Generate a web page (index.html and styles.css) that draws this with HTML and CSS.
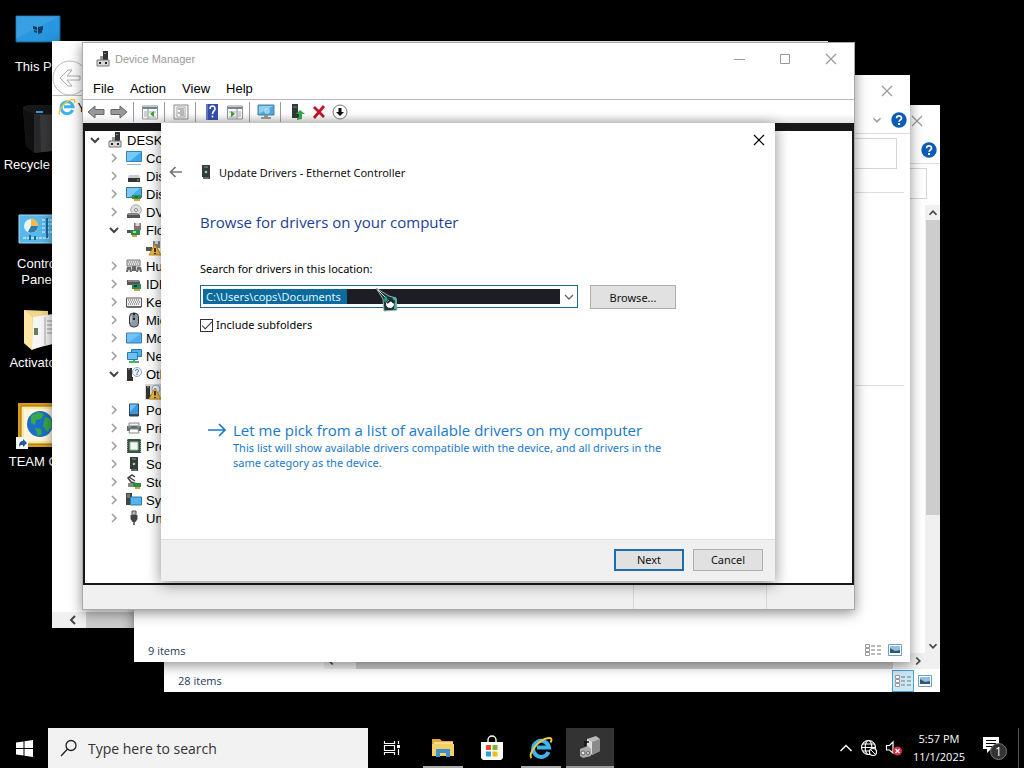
FILE: index.html
```html
<!DOCTYPE html>
<html lang="en">
<head>
<meta charset="UTF-8" />
<title>Desktop</title>
<link rel="stylesheet" href="styles.css">
</head>
<body>

<svg class="defs" aria-hidden="true">
  <symbol id="i-right" viewBox="0 0 16 16"><path d="M6 4l4 4-4 4" fill="none" stroke="#a0a0a0" stroke-width="1.6"/></symbol>
  <symbol id="i-down" viewBox="0 0 16 16"><path d="M4 6l4 4 4-4" fill="none" stroke="#444" stroke-width="2"/></symbol>
  <symbol id="i-up" viewBox="0 0 16 16"><path d="M4 10l4-4 4 4" fill="none" stroke="#444" stroke-width="2"/></symbol>
  <symbol id="i-close" viewBox="0 0 16 16"><path d="M3 3l10 10M13 3L3 13" fill="none" stroke="currentColor" stroke-width="1.2"/></symbol>
  <symbol id="i-help" viewBox="0 0 16 16"><circle cx="8" cy="8" r="7.7" fill="#0b5cb4"/><path d="M5.6 6.2c0-3 4.9-3 4.9 0 0 1.6-2.4 1.8-2.4 3.6" fill="none" stroke="#fff" stroke-width="1.7"/><rect x="7.1" y="11" width="2" height="2" fill="#fff"/></symbol>
  <symbol id="i-pc" viewBox="0 0 16 16"><path d="M8 0h5v9H8z" fill="#333"/><path d="M9 2.5h2" stroke="#888"/><path d="M5 5h3v4H5z" fill="#999"/><path d="M2 9h12v6H2z" fill="#d8d8d8" stroke="#777"/><path d="M4 11h2v2H4zM10 11h2v2h-2z" fill="#222"/></symbol>
  <symbol id="i-screen" viewBox="0 0 16 16"><path d="M.5 1.500h15v10H.5z" fill="#3aa9ea" stroke="#3a82b5"/><path d="M1 2h14L4 11H1z" fill="#74cbfa"/><path d="M1 14.500h14" stroke="#8fb6d0"/></symbol>
  <symbol id="i-monitor" viewBox="0 0 16 16"><path d="M.5 3h15v10H.5z" fill="#52aeea" stroke="#377bb0"/><path d="M1 3.500h14L3 12H1z" fill="#72c3f5"/></symbol>
  <symbol id="i-disk" viewBox="0 0 16 16"><path d="M3 7h10l1 3H2z" fill="#ccc"/><path d="M2 10h12v4H2z" fill="#333"/><path d="M11 12h2" stroke="#6d6"/></symbol>
  <symbol id="i-display" viewBox="0 0 16 16"><path d="M.5 1.500h15v10H.5z" fill="#49aee6" stroke="#3a6f95"/><path d="M1 2h13L4 11H1z" fill="#7acaf5"/><path d="M6 9h9v4H6z" fill="#2e9350"/><path d="M8 13h6v2H8z" fill="#d7a934"/><path d="M9 10h3v2H9z" fill="#174"/></symbol>
  <symbol id="i-dvd" viewBox="0 0 16 16"><circle cx="10" cy="6" r="5.300" fill="#ddd" stroke="#aaa"/><circle cx="10" cy="6" r="1.500" fill="#fff" stroke="#888"/><path d="M2 9h9l3 2v3H1v-3z" fill="#555"/><path d="M2 10h10" stroke="#bbb"/></symbol>
  <symbol id="i-floppy" viewBox="0 0 16 16"><path d="M8 1h7v7H8z" fill="#777"/><path d="M9.500 1h4v3h-4z" fill="#fcc"/><path d="M1 8h9v3H1z" fill="#555"/><path d="M5 8h9v5H5z" fill="#2e8b44"/><path d="M7 9h3v2H7z" fill="#9d9"/><path d="M6 13h5v2H6z" fill="#c9a63c"/></symbol>
  <symbol id="i-warn" viewBox="0 0 16 16"><path d="M8 1h7v7H8z" fill="#888"/><path d="M10 1h3v3h-3z" fill="#cde"/><path d="M1 7h6v4H1z" fill="#555"/><path d="M10 4l6 11H4z" fill="#f6b93b" stroke="#b57d15" stroke-width=".8"/><path d="M10 8v4M10 13v1.300" stroke="#111" stroke-width="1.500"/></symbol>
  <symbol id="i-unknown" viewBox="0 0 16 16"><path d="M1 2h5v9h1v4H1z" fill="#333"/><path d="M2 3h2" stroke="#aaa"/><circle cx="11" cy="6" r="4.500" fill="#eef5fc" stroke="#8fa9c4"/><path d="M9.500 5c0-2 3-2 3 0 0 1-1.500 1-1.500 2.500M11 8v1" fill="none" stroke="#2b5c9e"/></symbol>
  <symbol id="i-unknown-warn" viewBox="0 0 16 16"><path d="M1 2h4v9h1v4H1z" fill="#333"/><path d="M2 3h2" stroke="#aaa"/><circle cx="11" cy="5" r="4" fill="#eef5fc" stroke="#8fa9c4"/><path d="M10 4l6 11H4z" fill="#f6b93b" stroke="#b57d15" stroke-width=".8"/><path d="M10 7v4.500M10 13v1.300" stroke="#111" stroke-width="1.500"/></symbol>
  <symbol id="i-hid" viewBox="0 0 16 16"><path d="M1 2h13v6H1z" fill="#ddd" stroke="#777"/><path d="M2 4h11M3 6h10" stroke="#777" stroke-dasharray="1 1"/><path d="M1 9h4l1 5H4L3 11l-1 3H0zM6 8h4v5H6zM11 9h4l1 5h-2l-1-3-1 3h-2z" fill="#666"/></symbol>
  <symbol id="i-ide" viewBox="0 0 16 16"><path d="M1 4h12l1 2v3H1z" fill="#555"/><path d="M2 5h11" stroke="#bbb"/><path d="M6 8h9v5H6z" fill="#2e8b57"/><path d="M8 9h3v2H8z" fill="#134"/><path d="M8 13h6v2H8z" fill="#c9a63c"/></symbol>
  <symbol id="i-keyboard" viewBox="0 0 16 16"><path d="M.5 4h15v9H.5z" fill="#eee" stroke="#555"/><path d="M2 6h12M3 8h11M2 10h12" stroke="#555" stroke-dasharray="1 1"/><path d="M1 13h14" stroke="#333"/></symbol>
  <symbol id="i-mouse" viewBox="0 0 16 16"><rect x="3.500" y="1" width="9" height="14" rx="4" fill="#8f9aa5" stroke="#333"/><path d="M8 1v7" stroke="#222" stroke-width="2"/><path d="M8 3v3" stroke="#8fd6ff"/><path d="M5 4v6" stroke="#dde"/></symbol>
  <symbol id="i-network" viewBox="0 0 16 16"><path d="M5.500 1.500h10v7h-10z" fill="#4fb0ea" stroke="#2a77ac"/><path d="M1.500 4.500h10v7h-10z" fill="#6cc3f3" stroke="#2a77ac"/><path d="M3 14h10M8 12v2" stroke="#4caf6a" stroke-width="2"/></symbol>
  <symbol id="i-portable" viewBox="0 0 16 16"><path d="M3.500 2h9v12h-9z" fill="#3b98e0" stroke="#345"/><path d="M4 2.500h7L4 10z" fill="#6fbdf5"/><path d="M4 13h8" stroke="#333" stroke-width="1.500"/></symbol>
  <symbol id="i-printer" viewBox="0 0 16 16"><path d="M3 3h10v3H3z" fill="#eee" stroke="#888"/><path d="M1 6h14v5H1z" fill="#666"/><path d="M4 9h8l1 4H3z" fill="#fff" stroke="#888"/><path d="M2 7h3M11 7h3" stroke="#5cb"/></symbol>
  <symbol id="i-cpu" viewBox="0 0 16 16"><path d="M1 1h14v14H1z" fill="#36543f"/><path d="M4 4h8v8H4z" fill="#f4f6f4" stroke="#9b9"/><path d="M1.500 1v14M14.500 1v14" stroke="#8a9" stroke-dasharray="1 1"/></symbol>
  <symbol id="i-tower" viewBox="0 0 16 16"><path d="M4 1h8v12H4zM5 13h7v2H5z" fill="#333c38"/><path d="M6 3h4M5 14h6" stroke="#899"/><circle cx="8" cy="8" r="1.300" fill="#9cb"/></symbol>
  <symbol id="i-storage" viewBox="0 0 16 16"><path d="M9 3L6 1 2 4l3 4 6 2M3 3l6 4" fill="none" stroke="#444" stroke-width="1.500"/><path d="M2 9h7v4H2z" fill="#888"/><path d="M7 9h8v4H7z" fill="#2e8b44"/><path d="M9 13h5v2H9z" fill="#c9a63c"/></symbol>
  <symbol id="i-system" viewBox="0 0 16 16"><path d="M0 1h6v12H0z" fill="#444"/><path d="M1 3h3M1 5h3" stroke="#6c8"/><path d="M4.500 5h11v8h-11z" fill="#55b4ec" stroke="#2a77ac"/></symbol>
  <symbol id="i-usb" viewBox="0 0 16 16"><path d="M6 1h4v4H6z" fill="#bbb" stroke="#555"/><path d="M4.500 5h7v4l-2 3h-3l-2-3z" fill="#444"/><path d="M8 11v4" stroke="#444" stroke-width="1.500"/></symbol>
  <symbol id="i-ie" viewBox="0 0 24 24"><path d="M19.500 16A8 8 0 1 1 20 11.500H8" fill="none" stroke="#3cb4ee" stroke-width="4"/><path d="M2.500 22C-1 18 9 3 20 2c3-.300 3 2 1.500 4.500" fill="none" stroke="#f2c834" stroke-width="1.900"/></symbol>
  <symbol id="i-details" viewBox="0 0 18 14"><path d="M1.500 1.500h4v3h-4zM1.500 5.500h4v3h-4zM1.500 9.500h4v3h-4z" fill="#fff" stroke="#999"/><path d="M7 3h10M7 7h10M7 11h10" stroke="#777" stroke-dasharray="4 2"/></symbol>
  <symbol id="i-thumbs" viewBox="0 0 14 12"><path d="M.5.500h13v11H.5z" fill="#fff" stroke="#6e9cc2"/><path d="M2 2h10v4L2 9z" fill="#8fc0e6"/><path d="M2 4l5 3 5-1v3H2z" fill="#33566b"/></symbol>
</svg>

<main class="desktop">
  <ul class="shortcuts">
    <li>
      <svg width="46" height="28" viewBox="0 0 46 28"><path d="M1 1h44v26H1z" fill="#2797df" stroke="#17608f"/><path d="M1 1h44L1 24z" fill="#48aae8" opacity=".5"/><path d="M18 11l4 1v3l-4-1zM23 12l5-1v4l-5 1zM19 15l3 1v2l-3-1zM23 16l4-1v3l-4 1z" fill="#123c62"/></svg>
      <span>This PC</span>
    </li>
    <li>
      <svg width="30" height="48" viewBox="0 0 30 48"><path d="M0 2l6-2h24v46l-18 2-9-7z" fill="#29292b"/><path d="M0 2l11 7h19V0H6z" fill="#161719"/><path d="M11 9v38l-8-6L0 3z" fill="#101113"/><path d="M17 10h13v36l-12 1z" fill="#39393b"/><path d="M13 7h7" stroke="#2c9ae4" stroke-width="2"/></svg>
      <span>Recycle Bin</span>
    </li>
    <li>
      <svg width="40" height="30" viewBox="0 0 40 30"><path d="M1 1h38v28H1z" fill="#58b8eb" stroke="#a4dbf6"/><circle cx="13" cy="12" r="7" fill="#e6f3fa"/><path d="M13 12V4a8 8 0 0 1 7 8z" fill="#f4b947"/><path d="M13 12h7a7 7 0 0 1-10 6z" fill="#3578ad"/><path d="M24 6h10M24 10h12M24 14h8M24 18h12M5 24h26" stroke="#fff" stroke-dasharray="3 1"/><path d="M12 21v5M17 22v4M29 4v20" stroke="#176aa0" stroke-width="2"/></svg>
      <span>Control<br>Panel</span>
    </li>
    <li>
      <svg width="30" height="42" viewBox="0 0 30 42"><path d="M1 1l24 1v33L9 41l-8-7z" fill="#f3d689"/><path d="M10 8l20-3v30l-21 5z" fill="#f7f7f7"/><path d="M22 8v28" stroke="#aaa"/><path d="M24 12h5M24 16h5M24 20h5M24 24h5" stroke="#999"/><path d="M11 19h4v7h-4z" fill="#6c7b5a"/><path d="M1 1l8 7v33l-8-7z" fill="#ffe6a4"/></svg>
      <span>Activators</span>
    </li>
    <li>
      <svg width="44" height="48" viewBox="0 0 44 48"><path d="M2 1h40v44H2z" fill="#d99d19"/><path d="M5 4h34v38H5z" fill="#fae7a0" stroke="#9c6c0c"/><path d="M8 7h28v32H8z" fill="#fff7d7"/><circle cx="24" cy="22" r="13" fill="#1c6fc9"/><path d="M15 14l7-4 6 2-3 5-5 1-1 5-4-2zM29 15l6 2 1 8-5 5-4-6zM19 26l6 1 1 5-4 2z" fill="#38a948"/><path d="M0 35h12v12H0z" fill="#f7f7f7"/><path d="M3 45c0-4 1-6 4-6v-2l4 4-4 4v-2c-2 0-3 0-4 2z" fill="#235898"/></svg>
      <span>TEAM OS</span>
    </li>
  </ul>

  <section class="window browser">
    <div class="nav"><svg width="36" height="36" viewBox="0 0 36 36"><circle cx="18" cy="18" r="17" fill="#fff" stroke="#bbb"/><path d="M28 16H15l5-6h-4l-8 8 8 8h4l-5-6h13z" fill="#fff" stroke="#aaa"/></svg></div>
    <div class="tab"><svg width="18" height="18"><use href="#i-ie"/></svg><span>Y</span></div>
    <div class="hscroll"><svg class="turn" width="16" height="16"><use href="#i-up"/></svg><div class="thumb"></div></div>
  </section>

  <section class="window explorer explorer-back">
    <header class="caption"><button class="plain" aria-label="Close"><svg width="16" height="16"><use href="#i-close"/></svg></button></header>
    <div class="ribbon"><svg width="16" height="16"><use href="#i-help"/></svg></div>
    <div class="address"><div class="box"></div></div>
    <div class="files">
      <div class="vscroll"><svg width="14" height="14"><use href="#i-up"/></svg><div class="thumb"></div><svg width="14" height="14"><use href="#i-down"/></svg></div>
    </div>
    <div class="hscroll"><svg class="turn" width="14" height="14"><use href="#i-up"/></svg><div class="thumb"></div><svg class="turn-right" width="14" height="14"><use href="#i-up"/></svg></div>
    <footer class="items"><span>28 items</span>
      <button class="view on" aria-label="Details"><svg width="18" height="14"><use href="#i-details"/></svg></button>
      <button class="view" aria-label="Thumbnails"><svg width="14" height="12"><use href="#i-thumbs"/></svg></button>
    </footer>
  </section>

  <section class="window explorer explorer-front">
    <header class="caption"><button class="plain" aria-label="Close"><svg width="16" height="16"><use href="#i-close"/></svg></button></header>
    <div class="ribbon"><svg class="faint" width="14" height="14"><use href="#i-down"/></svg><svg width="16" height="16"><use href="#i-help"/></svg></div>
    <div class="address"><div class="box"></div></div>
    <div class="rules"></div>
    <footer class="items"><span>9 items</span>
      <button class="view" aria-label="Details"><svg width="18" height="14"><use href="#i-details"/></svg></button>
      <button class="view" aria-label="Thumbnails"><svg width="14" height="12"><use href="#i-thumbs"/></svg></button>
    </footer>
  </section>

  <section class="window manager">
    <header class="title">
      <svg width="16" height="16"><use href="#i-pc"/></svg>
      <h1>Device Manager</h1>
      <button class="plain" aria-label="Minimize"><svg width="16" height="16" viewBox="0 0 16 16"><path d="M3 8.500h11" stroke="currentColor"/></svg></button>
      <button class="plain" aria-label="Maximize"><svg width="16" height="16" viewBox="0 0 16 16"><path d="M3.500 3.500h9v9h-9z" fill="none" stroke="currentColor"/></svg></button>
      <button class="plain" aria-label="Close"><svg width="16" height="16"><use href="#i-close"/></svg></button>
    </header>
    <nav class="menu">
      <a href="#">File</a>
      <a href="#">Action</a>
      <a href="#">View</a>
      <a href="#">Help</a>
    </nav>
    <div class="toolbar">
      <button class="plain" aria-label="Back"><svg width="18" height="16" viewBox="0 0 18 16"><path d="M1 8l7-6v3.500h9v5H8V14z" fill="#999" stroke="#666"/></svg></button>
      <button class="plain" aria-label="Forward"><svg width="18" height="16" viewBox="0 0 18 16"><path d="M17 8l-7-6v3.500H1v5h9V14z" fill="#999" stroke="#666"/></svg></button>
      <i class="bar"></i>
      <button class="plain" aria-label="Console tree"><svg width="18" height="16" viewBox="0 0 18 16"><path d="M1.500 2h15v13h-15z" fill="#f5f7f8" stroke="#8b959d"/><path d="M2 4h14" stroke="#738391" stroke-width="2"/><path d="M7 5v10" stroke="#888"/><path d="M3 8h3M3 10h3M3 12h3M8 8h7M8 13h7" stroke="#aaa"/><path d="M13 7v6l-4-3z" fill="#3b9c36"/></svg></button>
      <i class="bar"></i>
      <button class="plain" aria-label="Properties"><svg width="18" height="16" viewBox="0 0 18 16"><path d="M2 1h14v14H2z" fill="#f4f4f4" stroke="#888"/><path d="M5 3h8v10H5z" fill="#fff" stroke="#aaa"/><path d="M6 5h6M8 7h4M6 9h6M8 11h4" stroke="#777"/></svg></button>
      <i class="bar"></i>
      <button class="plain" aria-label="Help"><svg width="18" height="16" viewBox="0 0 18 16"><path d="M3 0h12v16H3z" fill="#334fae"/><path d="M4 0v16" stroke="#8fa4e6"/><path d="M7 5c0-4 5-4 5 0 0 2-2.500 2-2.500 5M9.500 11.500v2" fill="none" stroke="#fff" stroke-width="1.600"/></svg></button>
      <button class="plain" aria-label="Action pane"><svg width="18" height="16" viewBox="0 0 18 16"><path d="M1.500 2h15v13h-15z" fill="#f5f7f8" stroke="#8b959d"/><path d="M2 4h14" stroke="#738391" stroke-width="2"/><path d="M11 5v10" stroke="#888"/><path d="M12 8h3M12 10h3M12 12h3M3 8h7M3 13h7" stroke="#aaa"/><path d="M5 7v6l4-3z" fill="#3b9c36"/></svg></button>
      <i class="bar"></i>
      <button class="plain" aria-label="Scan"><svg width="18" height="16" viewBox="0 0 18 16"><path d="M1 1h16v10H1z" fill="#4da9dd" stroke="#4b829f"/><path d="M2 2h14L2 10z" fill="#90cfee"/><path d="M4 14h10M7 12h4" stroke="#999" stroke-width="2"/><circle cx="10" cy="7" r="3" fill="#b9e5f9" opacity=".7"/></svg></button>
      <i class="bar"></i>
      <button class="plain" aria-label="Update driver"><svg width="18" height="16" viewBox="0 0 18 16"><path d="M4 0h6v10h2v4H4z" fill="#303a34"/><path d="M5 3h4" stroke="#788"/><path d="M12 6l5 4h-3v5l-5 1v-2l2-1v-3H8z" fill="#36a94c"/></svg></button>
      <button class="plain" aria-label="Uninstall"><svg width="16" height="16" viewBox="0 0 16 16"><path d="M3 3l10 10M13 2L3 14" stroke="#c4152b" stroke-width="2.800"/></svg></button>
      <button class="plain" aria-label="Disable"><svg width="16" height="16" viewBox="0 0 16 16"><circle cx="8" cy="8" r="7" fill="#fff" stroke="#777"/><path d="M6.500 4h3v4H12l-4 4-4-4h2.500z" fill="#111"/></svg></button>
    </div>
    <div class="content">
      <ul class="tree">
        <li><svg><use href="#i-down"/></svg><svg><use href="#i-pc"/></svg>DESK</li>
        <li class="sub"><svg><use href="#i-right"/></svg><svg><use href="#i-screen"/></svg>Com</li>
        <li class="sub"><svg><use href="#i-right"/></svg><svg><use href="#i-disk"/></svg>Disk</li>
        <li class="sub"><svg><use href="#i-right"/></svg><svg><use href="#i-display"/></svg>Disp</li>
        <li class="sub"><svg><use href="#i-right"/></svg><svg><use href="#i-dvd"/></svg>DVD</li>
        <li class="sub"><svg><use href="#i-down"/></svg><svg><use href="#i-floppy"/></svg>Flop</li>
        <li class="leaf"><svg><use href="#i-warn"/></svg></li>
        <li class="sub"><svg><use href="#i-right"/></svg><svg><use href="#i-hid"/></svg>Hum</li>
        <li class="sub"><svg><use href="#i-right"/></svg><svg><use href="#i-ide"/></svg>IDE</li>
        <li class="sub"><svg><use href="#i-right"/></svg><svg><use href="#i-keyboard"/></svg>Key</li>
        <li class="sub"><svg><use href="#i-right"/></svg><svg><use href="#i-mouse"/></svg>Mice</li>
        <li class="sub"><svg><use href="#i-right"/></svg><svg><use href="#i-monitor"/></svg>Mon</li>
        <li class="sub"><svg><use href="#i-right"/></svg><svg><use href="#i-network"/></svg>Net</li>
        <li class="sub"><svg><use href="#i-down"/></svg><svg><use href="#i-unknown"/></svg>Oth</li>
        <li class="leaf selected"><svg><use href="#i-unknown-warn"/></svg></li>
        <li class="sub"><svg><use href="#i-right"/></svg><svg><use href="#i-portable"/></svg>Port</li>
        <li class="sub"><svg><use href="#i-right"/></svg><svg><use href="#i-printer"/></svg>Print</li>
        <li class="sub"><svg><use href="#i-right"/></svg><svg><use href="#i-cpu"/></svg>Proc</li>
        <li class="sub"><svg><use href="#i-right"/></svg><svg><use href="#i-tower"/></svg>Soft</li>
        <li class="sub"><svg><use href="#i-right"/></svg><svg><use href="#i-storage"/></svg>Stor</li>
        <li class="sub"><svg><use href="#i-right"/></svg><svg><use href="#i-system"/></svg>Syst</li>
        <li class="sub"><svg><use href="#i-right"/></svg><svg><use href="#i-usb"/></svg>Univ</li>
      </ul>
    </div>
    <footer class="status"><span></span><span></span><span></span></footer>
  </section>

  <form class="window dialog">
    <div class="dialog-top"><button type="button" class="plain" aria-label="Close"><svg width="16" height="16"><use href="#i-close"/></svg></button></div>
    <div class="dialog-title">
      <button type="button" class="plain" aria-label="Back"><svg width="14" height="14" viewBox="0 0 14 14"><path d="M13 7H2M6.500 2L1.500 7l5 5" fill="none" stroke="#777" stroke-width="1.700"/></svg></button>
      <svg width="16" height="16"><use href="#i-tower"/></svg>
      <span>Update Drivers - Ethernet Controller</span>
    </div>
    <div class="dialog-body">
      <h2>Browse for drivers on your computer</h2>
      <label for="location">Search for drivers in this location:</label>
      <div class="pick">
        <div class="combo">
          <input type="text" id="location" value="C:\Users\cops\Documents" />
          <button type="button" class="plain" aria-label="Show locations"><svg width="14" height="14" viewBox="0 0 14 14"><path d="M3 5l4 4 4-4" fill="none" stroke="#666" stroke-width="1.300"/></svg></button>
        </div>
        <button type="button" class="push browse">Browse...</button>
      </div>
      <label class="check"><input type="checkbox" checked />Include subfolders</label>
      <a class="command" href="#">
        <svg width="20" height="14" viewBox="0 0 20 14"><path d="M1 7h17M12 1l6 6-6 6" fill="none" stroke="#1979ca" stroke-width="1.700"/></svg>
        <strong>Let me pick from a list of available drivers on my computer</strong>
        <span>This list will show available drivers compatible with the device, and all drivers in the<br>same category as the device.</span>
      </a>
    </div>
    <footer class="dialog-buttons">
      <button type="submit" class="push main">Next</button>
      <button type="button" class="push">Cancel</button>
    </footer>
  </form>

  <svg class="pointer" width="24" height="26" viewBox="0 0 24 26"><path d="M1 1l13 8 7 2 1 12-13 1-1-12z" fill="#15383c" stroke="#9db3b3"/><path d="M3 3l8 8" stroke="#ddd"/><path d="M9 12l2-3 2 4-2 7z" fill="#20a38a"/><circle cx="15" cy="17" r="4.500" fill="#fff" stroke="#123"/><path d="M18 11l3 2-1 9" fill="none" stroke="#4bb6ae" stroke-width="2"/><path d="M12 16l4-3 3 3" fill="none" stroke="#222" stroke-width="2"/></svg>
</main>

<footer class="taskbar">
  <button class="start" aria-label="Start"><svg width="17" height="17" viewBox="0 0 17 17"><path d="M0 2.500L7.500 1.500V8H0zM8.500 1.300L17 0v8H8.500zM0 9h7.500v6.500L0 14.500zM8.500 9H17v8l-8.500-1.300z" fill="#fff"/></svg></button>
  <label class="search">
    <svg width="18" height="18" viewBox="0 0 18 18"><circle cx="11" cy="6.500" r="5" fill="none" stroke="#222" stroke-width="1.300"/><path d="M7.500 10L1 17" stroke="#222" stroke-width="1.300"/></svg>
    <input type="text" placeholder="Type here to search" aria-label="Type here to search" />
  </label>
  <button class="task view-tasks" aria-label="Task View"><svg width="18" height="16" viewBox="0 0 18 16"><path d="M1.500 1v2.500h10V1M1.500 5.500h10v5h-10zM1.500 15v-2.500h10V15M15.500 1v3M15.500 9v6" fill="none" stroke="#fff" stroke-width="1.200"/><path d="M14 5h3v3h-3z" fill="#fff"/></svg></button>
  <button class="task open" aria-label="File Explorer"><svg width="24" height="20" viewBox="0 0 24 20"><path d="M1 1h8l2 2h11v15H1z" fill="#e7a83b"/><path d="M3 4h19v4H3z" fill="#f9df91"/><path d="M1 6h22v12H1z" fill="#f8cf62"/><path d="M5 11h14v8h-4v-4H9v4H5z" fill="#3b92cf"/></svg></button>
  <button class="task" aria-label="Store"><svg width="24" height="26" viewBox="0 0 24 26"><path d="M8 8V5a4 4 0 0 1 8 0v3" fill="none" stroke="#fff" stroke-width="1.400"/><path d="M1 7h22v16l-2 2H3l-2-2z" fill="#fff"/><path d="M6 10h5v5H6z" fill="#e84b28"/><path d="M12.500 10h5v5h-5z" fill="#74b92f"/><path d="M6 16.500h5v5H6z" fill="#259fe0"/><path d="M12.500 16.500h5v5h-5z" fill="#f6b915"/></svg></button>
  <button class="task open" aria-label="Internet Explorer"><svg width="24" height="24"><use href="#i-ie"/></svg></button>
  <button class="task active" aria-label="Device Manager"><svg width="24" height="24" viewBox="0 0 24 24"><path d="M9 4l9-3 4 3v12l-8 4-5-3z" fill="#b9b9b9"/><path d="M14 7l8-3v12l-8 4z" fill="#8b8b8b"/><path d="M9 4l5 3v12l-5-3z" fill="#ddd"/><path d="M2 14l8-3 3 3v7l-8 2-3-2z" fill="#aaa"/><circle cx="5" cy="18" r="2" fill="#eee" stroke="#666"/><circle cx="10" cy="18" r="1.500" fill="#eee" stroke="#666"/><path d="M7 11V7h4" fill="none" stroke="#111" stroke-width="1.500"/></svg></button>
  <div class="tray">
    <svg width="14" height="14" viewBox="0 0 14 14"><path d="M1.500 10L7 4.500l5.500 5.500" fill="none" stroke="#fff" stroke-width="1.400"/></svg>
    <svg width="18" height="18" viewBox="0 0 18 18"><g fill="none" stroke="#fff" stroke-width="1.100"><circle cx="8.500" cy="8.500" r="7"/><ellipse cx="8.500" cy="8.500" rx="3.300" ry="7"/><path d="M1.500 8.500h14M2.500 5h12M2.500 12h12"/></g><circle cx="13" cy="13" r="3.500" fill="#000" stroke="#fff" stroke-width="1.200"/><path d="M11 11l4 4" stroke="#fff"/></svg>
    <svg width="18" height="16" viewBox="0 0 18 16"><path d="M1.500 5.500h3L8 2v11L4.500 10h-3z" fill="none" stroke="#fff" stroke-width="1.200"/><circle cx="12.500" cy="11" r="4.500" fill="#d52b3d"/><path d="M10.500 9l4 4M14.500 9l-4 4" stroke="#fff" stroke-width="1.300"/></svg>
    <time>5:57 PM<br>11/1/2025</time>
    <button class="notes" aria-label="Notifications"><svg width="26" height="26" viewBox="0 0 26 26"><path d="M1 2h16v12H9l-4 4v-4H1z" fill="#fff"/><path d="M4 5.500h10M4 8.500h10M4 11.500h7" stroke="#000"/><circle cx="16.500" cy="16.500" r="8" fill="#333" stroke="#777"/></svg><b>1</b></button>
  </div>
</footer>

</body>
</html>
```
FILE: styles.css
```css
* { box-sizing: border-box; }
body { margin: 0; height: 100vh; display: flex; flex-direction: column; background: #000; font-family: "Open Sans", sans-serif; font-size: 11px; overflow: hidden; }
ul { list-style: none; margin: 0; padding: 0; }
h1, h2 { margin: 0; font-weight: normal; }
button, input { font: inherit; color: inherit; margin: 0; }
svg { display: block; flex: none; }
a { color: inherit; text-decoration: none; }
.defs { position: absolute; width: 0; height: 0; }
.plain { border: 0; padding: 0; background: none; display: block; }

.desktop { flex: 1; position: relative; overflow: hidden; }
.window { position: absolute; display: flex; flex-direction: column; background: #fff; box-shadow: 0 3px 12px rgba(0,0,0,.45); }

/* desktop icons */
.shortcuts { width: 76px; padding-top: 14px; font-family: "Liberation Sans", sans-serif; font-size: 13px; line-height: 16px; color: #fff; text-align: center; }
.shortcuts li { height: 98px; display: flex; flex-direction: column; align-items: center; justify-content: flex-end; gap: 4px; white-space: nowrap; }
.shortcuts li:first-child { height: 61px; gap: 16px; }
.shortcuts li:nth-child(3) { height: 115px; gap: 12px; }
.shortcuts li:nth-child(4) { height: 83px; }
.shortcuts li:nth-child(5) { height: 99px; }

/* explorer windows */
.explorer-back { inset: 105px 84px 36px 164px; }
.explorer-front { inset: 75px 114px 66px 134px; }
.caption { height: 32px; display: flex; justify-content: flex-end; align-items: center; padding-right: 15px; color: #999; }
.ribbon { height: 27px; display: flex; justify-content: flex-end; align-items: center; gap: 7px; padding-right: 3px; border-bottom: 1px solid #ddd; }
.faint { opacity: .5; }
.address { height: 41px; padding: 4px 13px 6px 400px; }
.address .box { height: 31px; border: 1px solid #d5d5d5; }
.files { flex: 1; display: flex; justify-content: flex-end; }
.vscroll { width: 15px; background: #f0f0f0; display: flex; flex-direction: column; align-items: center; padding-top: 1px; }
.vscroll .thumb { width: 14px; flex: 0 0 66%; margin-bottom: auto; background: #cdcdcd; }
.hscroll { height: 16px; display: flex; align-items: center; background: #f0f0f0; }
.hscroll .thumb { flex: 1; height: 100%; background: #cdcdcd; }
.explorer-back .hscroll { margin-left: 160px; padding-right: 15px; gap: 18px; }
.turn { transform: rotate(-90deg); }
.turn-right { transform: rotate(90deg); }
.items { height: 23px; display: flex; align-items: center; padding: 0 4px 0 14px; color: #1e395b; }
.explorer-front .items { padding-bottom: 1px; }
.items span { margin-right: auto; }
.view { width: 22px; height: 22px; border: 1px solid transparent; padding: 0; background: none; display: grid; place-items: center; }
.view.on { background: #cce8f7; border-color: #4ba3cc; }
.rules { flex: 1; margin: 17px 6px 0 0; border-top: 1px solid #ddd; background: linear-gradient(#ddd, #ddd) 0 192px / 100% 1px no-repeat; }

/* browser window */
.browser { inset: 41px 196px 100px 52px; }
.nav { height: 55px; border-bottom: 1px solid #bbb; padding-top: 19px; }
.tab { flex: 1; display: flex; align-items: flex-start; gap: 2px; padding: 2px 6px; font-size: 13px; }
.browser .hscroll { padding-left: 13px; gap: 5px; }

/* device manager */
.manager { inset: 42px 169px 118px 82px; border: 1px solid #aaa; background: #f0f0f0; font-family: "Liberation Sans", sans-serif; font-size: 13px; }
.title { height: 31px; display: flex; align-items: center; padding: 0 15px 0 12px; background: #fff; color: #999; }
.title h1 { flex: 1; margin-left: 4px; font-size: 11px; }
.title .plain + .plain { margin-left: 30px; }
.menu { height: 25px; display: flex; align-items: center; gap: 16px; padding: 4px 10px 0; background: #fff; }
.toolbar { height: 24px; display: flex; align-items: center; gap: 5px; padding: 0 4px; border-top: 1px solid #bbb; background: linear-gradient(#fff, #fff 60%, #e4e4e4); }
.bar { width: 1px; height: 20px; margin-right: 2px; background: #999; }
.content { flex: 1; border: 2px solid #18181a; border-top-width: 8px; background: #fff; }
.tree { width: 90px; padding-left: 2px; overflow: hidden; }
.tree li { height: 18px; display: flex; align-items: center; white-space: nowrap; }
.tree svg { width: 16px; height: 16px; margin-right: 4px; }
.tree .sub { padding-left: 19px; }
.tree .leaf { padding-left: 58px; }
.tree .selected svg { background: #d9d9d9; }
.status { height: 24px; display: flex; justify-content: flex-end; }
.status span { width: 133px; border-right: 1px solid #d5d5d5; }
.status span:last-child { width: 87px; border: 0; }

/* update drivers dialog */
.dialog { inset: 123px 249px 147px 161px; box-shadow: 0 3px 14px rgba(0,0,0,.45); font-family: "Noto Sans", sans-serif; }
.dialog-top { display: flex; justify-content: flex-end; padding: 9px 8px 0; }
.dialog-title { display: flex; align-items: center; height: 48px; padding: 0 8px; color: #111; }
.dialog-title .plain { margin-right: 15px; }
.dialog-title span { margin-left: 5px; }
.dialog-body { flex: 1; display: flex; flex-direction: column; align-items: flex-start; padding: 15px 99px 0 39px; }
h2, .command strong { font-family: "Open Sans", sans-serif; font-size: 15px; }
h2 { line-height: 22px; color: #1c3f94; }
.dialog-body label { line-height: 16px; margin-top: 28px; }
.pick { align-self: stretch; display: flex; gap: 12px; margin-top: 8px; }
.combo { flex: 1; height: 23px; display: flex; align-items: center; border: 1px solid #19688f; padding-left: 2px; }
.combo input { flex: 1; min-width: 0; height: 15px; border: 0; padding: 0 3px; color: #dff3ff; background: linear-gradient(to right, #0c6a9c 144px, #1c1d25 144px); outline: 0; }
.combo .plain { width: 17px; display: grid; place-items: center; }
.push { width: 70px; height: 22px; border: 1px solid #adadad; padding: 0; background: #e1e1e1; color: #111; }
.browse { width: 86px; height: 24px; }
.push.main { border: 2px solid #1a6db0; }
.dialog-body .check { display: flex; align-items: center; gap: 3px; margin-top: 8px; }
.check input { appearance: none; width: 13px; height: 13px; border: 1px solid #333; display: grid; place-items: center; }
.check input:checked::after { content: ""; width: 9px; height: 4px; border: solid #333; border-width: 0 0 1px 1px; transform: rotate(-45deg) translate(1px, -1px); }
.command { display: grid; grid-template-columns: 20px auto; column-gap: 6px; align-items: center; margin: 87px 0 0 7px; color: #1979ca; white-space: nowrap; }
.command strong { font-weight: normal; line-height: 20px; }
.command span { grid-column: 2; line-height: 15px; }
.dialog-buttons { height: 42px; display: flex; justify-content: flex-end; align-items: center; gap: 9px; padding: 0 12px 2px; background: #f0f0f0; border-top: 1px solid #dfe3e6; }
.pointer { position: absolute; left: 375px; top: 287px; }

/* taskbar */
.taskbar { height: 40px; display: flex; color: #fff; background: #000; }
.taskbar button { border: 0; padding: 0; background: none; display: grid; place-items: center; }
.taskbar .start { width: 48px; }
.search { flex: 0 1 320px; display: flex; align-items: center; gap: 10px; padding-left: 12px; background: #f2f2f2; }
.search input { flex: 1; min-width: 0; border: 0; padding: 0; background: none; font-size: 14px; outline: 0; }
.search input::placeholder { color: #333; opacity: 1; }
.taskbar .task { width: 48px; margin-right: 1px; }
.taskbar .view-tasks { margin-right: 3px; }
.taskbar .open { background: linear-gradient(#aaa, #aaa) center bottom / 40px 2px no-repeat; }
.taskbar .active { background: #333; border-bottom: 2px solid #999; }
.tray { margin-left: auto; display: flex; align-items: center; gap: 7px; padding-right: 5px; }
.tray time { margin: 0 10px 0 3px; line-height: 18px; text-align: center; }
.taskbar .notes { position: relative; width: 37px; height: 40px; border-right: 1px solid #555; justify-items: start; }
.notes b { position: absolute; left: 13px; top: 16px; font-size: 12px; line-height: 16px; font-weight: normal; }
```
